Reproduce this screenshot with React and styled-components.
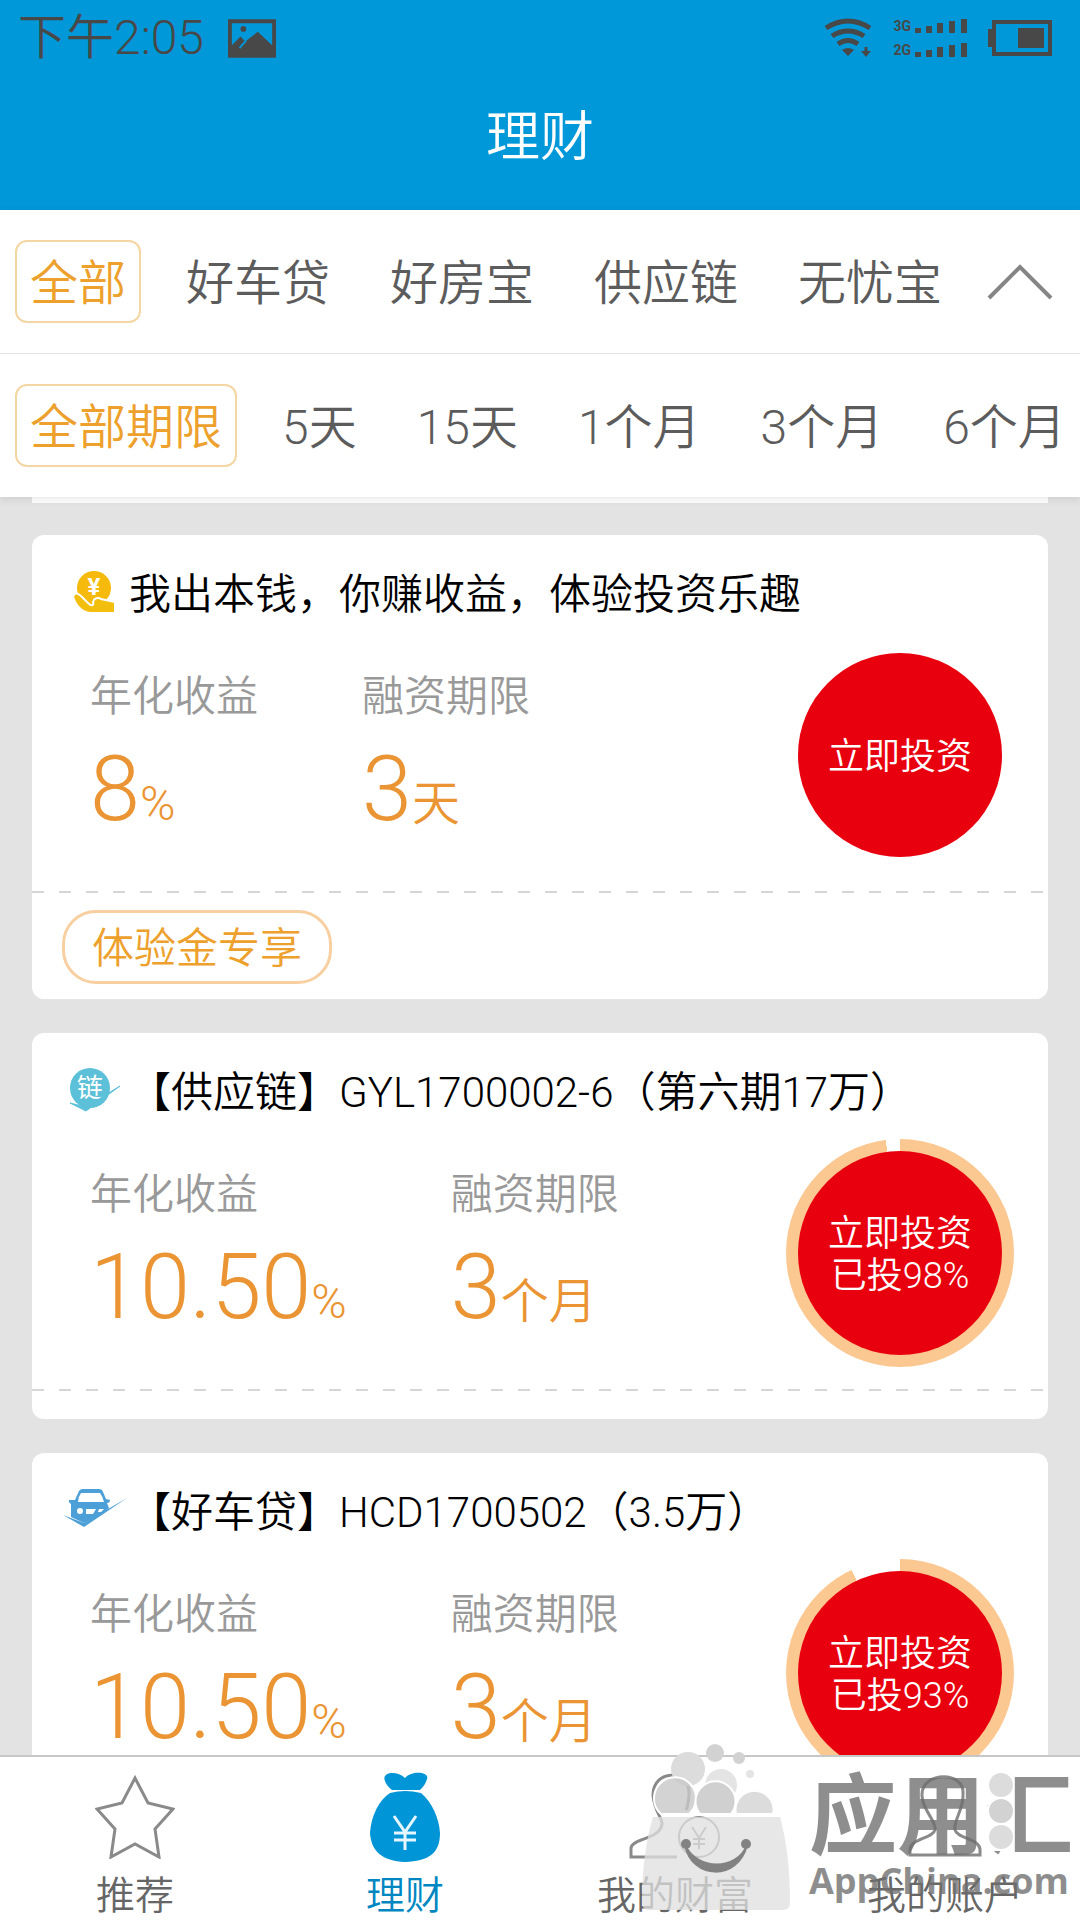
import styled, { createGlobalStyle } from "styled-components";
import { useState } from "react";

const categories = ["全部", "好车贷", "好房宝", "供应链", "无忧宝"];
const terms = ["全部期限", "5天", "15天", "1个月", "3个月", "6个月"];

const products = [
    { id: 1, icon: "hand", title: "我出本钱，你赚收益，体验投资乐趣", rate: "8", term: "3", unit: "天", tag: "体验金专享" },
    { id: 2, icon: "chain", title: "【供应链】GYL1700002-6（第六期17万）", rate: "10.50", term: "3", unit: "个月", progress: 98 },
    { id: 3, icon: "car", title: "【好车贷】HCD1700502（3.5万）", rate: "10.50", term: "3", unit: "个月", progress: 93 },
];

const PictureIcon = () => (
    <svg width="48" height="39" viewBox="0 0 50 40" fill="#484848">
        <path fillRule="evenodd" d="M0 0H50V40H0ZM4 4V27L13 18L18 23L31 13L46 27V4Z" />
        <circle cx="16" cy="10" r="3" />
        <path d="M12 30L19 22" stroke="#0098d8" strokeWidth="2" />
    </svg>
);

const WifiIcon = () => (
    <svg width="48" height="40" viewBox="0 0 48 40" fill="none" stroke="#484848" strokeWidth="5">
        <path d="M2 10Q24 -4 46 10" />
        <path d="M8 18Q24 8 40 18" />
        <path d="M14 26Q24 19 34 26" />
        <path d="M18 32Q24 28 30 32L24 38Z" fill="#484848" stroke="none" />
        <path d="M42 29V36" strokeWidth="3" />
        <path d="M37 33L42 39L47 33Z" fill="#484848" stroke="none" />
    </svg>
);

const SignalBars = () => (
    <svg width="52" height="15" viewBox="0 0 52 15" fill="#484848">
        <rect x="0" y="9" width="6" height="5" />
        <rect x="11" y="7" width="6" height="7" />
        <rect x="22" y="4" width="6" height="10" />
        <rect x="34" y="2" width="6" height="12" />
        <rect x="46" y="0" width="6" height="14" />
    </svg>
);

const BatteryIcon = () => (
    <svg width="64" height="36" viewBox="0 0 64 36" fill="#484848">
        <rect x="0" y="9" width="5" height="18" />
        <rect x="6" y="2" width="56" height="32" fill="none" stroke="#484848" strokeWidth="4" />
        <rect x="30" y="8" width="26" height="20" />
    </svg>
);

const HandIcon = () => (
    <svg width="42" height="44" viewBox="0 0 42 44">
        <circle cx="20" cy="18" r="17" fill="#f5ba0c" />
        <text x="20" y="25" textAnchor="middle" fontFamily="Roboto, sans-serif" fontWeight="700" fontSize="24" fill="#fff">¥</text>
        <path d="M-1 27C0 22 4 23 7 26L14 33C18 37 20 35 19 32C20 28 24 27 27 29L41 32V43H16C7 42 2 36 -1 27Z" fill="#f3bf0f" stroke="#fff" strokeWidth="2" />
    </svg>
);

const ChainIcon = () => (
    <svg width="54" height="46" viewBox="0 0 54 46">
        <circle cx="22" cy="21" r="20" fill="#5cc0d8" />
        <text x="22" y="30" textAnchor="middle" fontFamily="'Noto Sans CJK SC', sans-serif" fontWeight="400" fontSize="26" fill="#fff">链</text>
        <path d="M2 36L18 40L52 19L18 44Z" fill="#5cc0d8" stroke="#5cc0d8" />
    </svg>
);

const CarIcon = () => (
    <svg width="66" height="42" viewBox="0 0 66 42">
        <path fill="#4d9fd8" fillRule="evenodd" d="M17 2Q18 0 21 0H37Q40 0 41 3L44 10L48 11Q48 14 45 14L47 19L41 25L22 34L9 28V15Q6 13 7 11L13 11ZM19 4Q16 8 16 13H42Q41 8 38 4Z" />
        <circle cx="18" cy="22" r="3" fill="#fff" />
        <path d="M24 20H34L31 25H24ZM37 20H42L39 23H36Z" fill="#fff" />
        <path d="M1 26L22 34L65 9L22 38Z" fill="#4d9fd8" />
    </svg>
);

const StarIcon = () => (
    <svg width="80" height="84" viewBox="0 0 80 84" fill="none" stroke="#8a8a8a" strokeWidth="3">
        <path d="M40 3L53 28L78 34L60 54L64 82L40 69L16 82L20 54L2 34L27 28Z" />
    </svg>
);

const MoneyBagIcon = () => (
    <svg width="70" height="92" viewBox="0 0 70 92">
        <path d="M15 10C11 1 27 -1 35 7C42 -1 60 1 57 8C56 12 54 15 50 19H22C18 16 16 13 15 10Z" fill="#0095d6" />
        <path d="M20 22Q35 18 51 22C62 31 69 47 70 62C70 83 58 90 35 91C12 90 1 80 0 62C1 45 9 29 20 22Z" fill="#0095d6" />
        <path d="M24 45L35 61L46 45M35 61V79M24 62H46M24 69H46" stroke="#e6f6ff" strokeWidth="3" fill="none" />
    </svg>
);

const WealthIcon = () => (
    <svg width="92" height="88" viewBox="0 0 92 88" fill="none" stroke="#8a8a8a" strokeWidth="3">
        <path d="M48 84H2V75C3 65 31 67 33 51C34 46 25 38 24 22C24 -4 60 -4 60 20C60 26 59 32 57 37" />
        <circle cx="70" cy="64" r="20" strokeWidth="2" />
        <path d="M63 54L70 65L77 54M70 65V76M64 66H76M64 71H76" strokeWidth="2" />
    </svg>
);

const AccountIcon = () => (
    <svg width="76" height="84" viewBox="0 0 76 84" fill="none" stroke="#8a8a8a" strokeWidth="3">
        <path d="M28 55C30 46 14 34 15 19C16 -4 58 -4 56 19C57 34 46 46 48 55C50 63 72 64 73 74V80H3V74C4 64 26 63 28 55Z" />
    </svg>
);

const productIcons = { hand: HandIcon, chain: ChainIcon, car: CarIcon };

const tabs = [
    { name: "推荐", icon: StarIcon },
    { name: "理财", icon: MoneyBagIcon },
    { name: "我的财富", icon: WealthIcon },
    { name: "我的账户", icon: AccountIcon },
];

const ProductCard = ({ product }) => {
    const Icon = productIcons[product.icon];

    return (
        <Card>
            <CardHead>
                <IconSlot><Icon /></IconSlot>
                <CardTitle>{product.title}</CardTitle>
            </CardHead>
            <CardBody>
                <Stat>
                    <StatLabel>年化收益</StatLabel>
                    <StatValue>{product.rate}<Unit>%</Unit></StatValue>
                </Stat>
                <Stat>
                    <StatLabel>融资期限</StatLabel>
                    <StatValue>{product.term}<Unit>{product.unit}</Unit></StatValue>
                </Stat>
                <InvestButton type="button" $progress={product.progress || 0}>
                    <InvestDisc>
                        <span>立即投资</span>
                        {product.progress && <span>已投{product.progress}%</span>}
                    </InvestDisc>
                </InvestButton>
            </CardBody>
            <DashedLine />
            <CardFoot>{product.tag && <Tag>{product.tag}</Tag>}</CardFoot>
        </Card>
    );
};

const StoreMark = () => (
    <Mark aria-hidden="true">
        <svg width="150" height="168" viewBox="0 0 150 168">
            <circle cx="46" cy="26" r="17" fill="#dcdcdc" />
            <circle cx="73" cy="10" r="9" fill="#d2d2d2" />
            <circle cx="97" cy="15" r="6" fill="#d2d2d2" />
            <circle cx="108" cy="31" r="4" fill="#e4e4e4" />
            <circle cx="79" cy="42" r="16" fill="#e4e4e4" />
            <path d="M19 71A21 21 0 1 1 47 71Z" fill="#c8c8c8" fillOpacity="0.8" stroke="#fff" strokeWidth="2" />
            <path d="M58 71A20 20 0 1 1 89 71Z" fill="#d0d0d0" stroke="#fff" strokeWidth="2" />
            <path d="M94 71A19 19 0 1 1 131 71Z" fill="#dcdcdc" stroke="#fff" strokeWidth="2" />
            <path d="M11 74H138Q148 110 148 160Q148 167 141 167H7Q0 167 0 160Q0 110 11 74Z" fill="#dfdfdf" fillOpacity="0.76" />
            <circle cx="44" cy="101" r="5" fill="#828282" />
            <circle cx="104" cy="101" r="5" fill="#828282" />
            <path d="M43 102C50 137 96 138 105 102C95 128 55 128 43 102Z" fill="#828282" stroke="#828282" strokeWidth="2" />
        </svg>
        <MarkText>
            <MarkName>
                应用汇
                <MarkDots width="26" height="84" viewBox="0 0 26 84">
                    <rect width="26" height="84" fill="#fff" />
                    <circle cx="13" cy="18" r="12" fill="#dcdcdc" />
                    <circle cx="13" cy="44" r="12" fill="#d2d2d2" />
                    <circle cx="13" cy="70" r="12" fill="#dcdcdc" />
                </MarkDots>
            </MarkName>
            <MarkSite>AppChina.com</MarkSite>
        </MarkText>
    </Mark>
);

const App = () => {
    const [category, setCategory] = useState("全部");
    const [term, setTerm] = useState("全部期限");
    const [tab, setTab] = useState("理财");

    return (
        <Screen>
            <GlobalStyle />
            <Header>
                <StatusBar>
                    <Clock>下午2:05</Clock>
                    <PictureIcon />
                    <StatusRight>
                        <WifiIcon />
                        <Signals>
                            <Signal>3G<SignalBars /></Signal>
                            <Signal>2G<SignalBars /></Signal>
                        </Signals>
                        <BatteryIcon />
                    </StatusRight>
                </StatusBar>
                <PageTitle>理财</PageTitle>
            </Header>

            <Filters>
                <FilterRow>
                    {categories.map((name) => (
                        <Chip key={name} type="button" $active={name === category} onClick={() => setCategory(name)}>{name}</Chip>
                    ))}
                    <Collapse type="button" aria-label="收起">
                        <svg width="66" height="38" viewBox="0 0 66 38" fill="none" stroke="#858585" strokeWidth="4">
                            <path d="M2 35L33 4L64 35" />
                        </svg>
                    </Collapse>
                </FilterRow>
                <FilterRow>
                    {terms.map((name) => (
                        <Chip key={name} type="button" $active={name === term} onClick={() => setTerm(name)}>{name}</Chip>
                    ))}
                </FilterRow>
            </Filters>

            <List>
                <CardTail />
                {products.map((product) => (
                    <ProductCard key={product.id} product={product} />
                ))}
            </List>

            <TabBar>
                {tabs.map(({ name, icon: Icon }) => (
                    <Tab key={name} href="#" $active={name === tab} onClick={() => setTab(name)}>
                        <TabIcon><Icon /></TabIcon>
                        {name}
                    </Tab>
                ))}
            </TabBar>
            <StoreMark />
        </Screen>
    );
};

export default App;

const GlobalStyle = createGlobalStyle`
    * {
        box-sizing: border-box;
    }

    body {
        margin: 0;
        font-family: Roboto, "Noto Sans CJK SC", sans-serif;
        font-weight: 350;
    }

    button {
        font: inherit;
        padding: 0;
        border: 0;
        background: none;
    }

    svg {
        display: block;
        flex: none;
    }
`;

const Screen = styled.div`
    position: relative;
    display: flex;
    flex-direction: column;
    height: 100vh;
    overflow: hidden;
    background: #e3e3e3;
`;

const Header = styled.header`
    flex: none;
    background: #0098d8;
`;

const StatusBar = styled.div`
    display: flex;
    align-items: center;
    height: 76px;
    padding: 0 28px 0 18px;
    gap: 24px;
    color: #484848;
`;

const Clock = styled.span`
    font-size: 48px;
    line-height: 76px;
`;

const StatusRight = styled.div`
    display: flex;
    align-items: center;
    gap: 21px;
    margin-left: auto;
`;

const Signals = styled.div`
    display: flex;
    flex-direction: column;
    gap: 9px;
`;

const Signal = styled.div`
    display: flex;
    align-items: center;
    gap: 4px;
    font-size: 14px;
    font-weight: 700;
    line-height: 15px;
`;

const PageTitle = styled.h1`
    margin: 0;
    height: 134px;
    font-size: 54px;
    font-weight: inherit;
    line-height: 124px;
    text-align: center;
    color: #fff;
`;

const Filters = styled.section`
    position: relative;
    z-index: 1;
    flex: none;
    background: #fff;
    box-shadow: 0 2px 8px rgba(0, 0, 0, 0.1);
`;

const FilterRow = styled.div`
    display: flex;
    align-items: center;
    gap: 30px;
    padding: 30px 15px;
    overflow: hidden;

    & + & {
        border-top: 1px solid #e2e2e2;
    }
`;

const Chip = styled.button`
    && {
        flex: none;
        height: 83px;
        padding: 4px 13px 0;
        border: 2px solid ${(props) => (props.$active ? "#f3d6a2" : "transparent")};
        border-radius: 12px;
        font-size: 48px;
        line-height: 75px;
        color: ${(props) => (props.$active ? "#eda12c" : "#5c5c5c")};
    }
`;

const Collapse = styled.button`
    margin: 0 12px 0 auto;
`;

const List = styled.main`
    flex: 1;
    min-height: 0;
    padding: 0 32px;
    overflow: hidden;
`;

const CardTail = styled.div`
    height: 6px;
    margin-bottom: 32px;
    background: #fff;
`;

const Card = styled.article`
    margin-bottom: 34px;
    border-radius: 12px;
    background: #fff;
`;

const CardHead = styled.div`
    display: flex;
    align-items: center;
    padding: 36px 30px 0;
`;

const IconSlot = styled.div`
    display: flex;
    align-items: center;
    justify-content: center;
    width: 66px;
    height: 48px;
    margin-right: 1px;
    padding-bottom: 6px;
`;

const CardTitle = styled.h2`
    margin: 0;
    font-size: 42px;
    font-weight: inherit;
    line-height: 48px;
    color: #000;
`;

const CardBody = styled.div`
    display: flex;
    gap: 104px;
    padding: 22px 34px 22px 58px;
`;

const Stat = styled.div`
    padding-top: 28px;
`;

const StatLabel = styled.div`
    font-size: 42px;
    line-height: 56px;
    color: #999;
`;

const StatValue = styled.div`
    margin-top: 20px;
    font-size: 90px;
    line-height: 90px;
    white-space: nowrap;
    color: #ea9433;
`;

const Unit = styled.span`
    font-size: 48px;
    line-height: 48px;
`;

const InvestButton = styled.button`
    && {
        flex: none;
        width: 228px;
        height: 228px;
        margin-left: auto;
        padding: 12px;
        border-radius: 50%;
        background: conic-gradient(#fcc892 ${(props) => props.$progress}%, transparent 0);
    }
`;

const InvestDisc = styled.span`
    display: flex;
    flex-direction: column;
    align-items: center;
    justify-content: center;
    width: 204px;
    height: 204px;
    padding-top: 4px;
    border-radius: 50%;
    background: #e9000f;
    font-size: 36px;
    line-height: 42px;
    color: #fff;
`;

const DashedLine = styled.div`
    height: 2px;
    background: repeating-linear-gradient(90deg, #d6d6d6 0 12px, transparent 12px 27px);
`;

const CardFoot = styled.div`
    min-height: 28px;
    padding: 0 30px;
`;

const Tag = styled.span`
    display: inline-block;
    margin: 17px 0 15px;
    padding: 4px 27px 0;
    border: 3px solid #f8cfa0;
    border-radius: 34px;
    font-size: 42px;
    line-height: 64px;
    vertical-align: top;
    color: #eda12c;
`;

const TabBar = styled.nav`
    display: grid;
    grid-template-columns: repeat(4, 1fr);
    flex: none;
    height: 165px;
    border-top: 2px solid #c6c8c8;
    background: #fff;
`;

const Tab = styled.a`
    display: flex;
    flex-direction: column;
    align-items: center;
    padding-top: 12px;
    font-size: 39px;
    line-height: 48px;
    text-decoration: none;
    color: ${(props) => (props.$active ? "#0087c2" : "#666")};
`;

const TabIcon = styled.span`
    display: flex;
    align-items: center;
    height: 96px;
    margin-bottom: 7px;
`;

const Mark = styled.div`
    position: absolute;
    right: 7px;
    bottom: 9px;
    display: flex;
    gap: 17px;
    pointer-events: none;
`;

const MarkText = styled.div`
    display: flex;
    flex-direction: column;
    padding-top: 24px;
    color: rgba(110, 110, 110, 0.78);
`;

const MarkName = styled.div`
    position: relative;
    font-family: "Noto Sans CJK SC", sans-serif;
    font-size: 88px;
    font-weight: 700;
    line-height: 84px;
    white-space: nowrap;
`;

const MarkDots = styled.svg`
    position: absolute;
    right: 59px;
    top: 0;
`;

const MarkSite = styled.div`
    margin-top: 8px;
    font-family: "Open Sans", sans-serif;
    font-size: 36px;
    font-weight: 700;
    line-height: 44px;
`;
